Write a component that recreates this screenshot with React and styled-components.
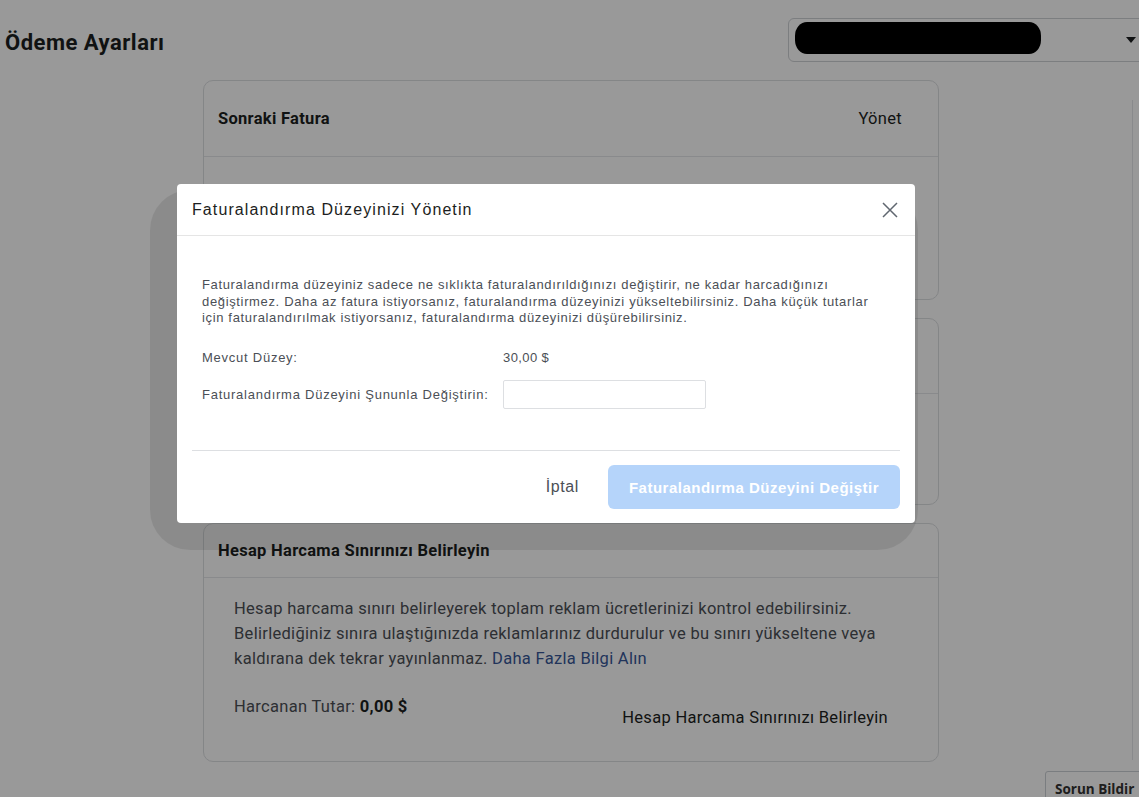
import React from "react";
import styled, { createGlobalStyle } from "styled-components";

const Global = createGlobalStyle`
  html, body {
    margin: 0;
    padding: 0;
    background: #ffffff;
    overflow: hidden;
  }
  body {
    font-family: Roboto, "Liberation Sans", Arial, sans-serif;
    color: #1c1e21;
  }
  * { box-sizing: border-box; }
`;

const Page = styled.div`
  width: 1139px;
  height: 797px;
  position: relative;
  overflow: hidden;
  background: #ffffff;
`;

const TopBar = styled.header`
  display: flex;
  align-items: center;
  justify-content: space-between;
  height: 80px;
  padding: 0 0 0 5px;
`;

const PageTitle = styled.h1`
  margin: 0;
  font-size: 22px;
  font-weight: 700;
  color: #1c1e21;
  letter-spacing: 0.5px;
  padding-top: 4px;
`;

const AccountSelect = styled.div`
  width: 364px;
  height: 44px;
  margin-right: -13px;
  border: 1px solid #cfd2d6;
  border-radius: 6px;
  display: flex;
  align-items: center;
  justify-content: space-between;
  padding: 0 15px 0 6px;
`;

const Caret = styled.span`
  width: 0;
  height: 0;
  border-left: 5px solid transparent;
  border-right: 5px solid transparent;
  border-top: 6px solid #1c1e21;
`;

const Columns = styled.div`
  display: grid;
  grid-template-columns: 203px 736px 1fr;
`;

const Stack = styled.main`
  grid-column: 2;
  display: flex;
  flex-direction: column;
  gap: 18px;
`;

const RightRail = styled.aside`
  grid-column: 3;
  justify-self: end;
  width: 7px;
  height: 660px;
  margin-top: 20px;
  border-left: 1px solid #e4e6e9;
`;

const Card = styled.section`
  border: 1px solid #dddfe2;
  border-radius: 10px;
  background: #ffffff;
  min-height: ${(p) => p.$min || 0}px;
  display: flex;
  flex-direction: column;
`;

const CardHead = styled.div`
  height: ${(p) => p.$h || 76}px;
  padding: 0 36px 0 14px;
  display: flex;
  align-items: center;
  justify-content: space-between;
  border-bottom: 1px solid #e4e6e9;
`;

const CardTitle = styled.h2`
  margin: 0;
  font-size: 16.5px;
  font-weight: 700;
  letter-spacing: 0.3px;
  color: #1c1e21;
`;

const HeadLink = styled.span`
  font-size: 16.5px;
  color: #1c1e21;
  letter-spacing: 0.3px;
`;

const CardDivider = styled.div`
  height: 75px;
  border-bottom: 1px solid #e4e6e9;
`;

const CardBody = styled.div`
  padding: 18px 50px 34px 30px;
`;

const BodyText = styled.p`
  margin: 0;
  font-size: 16.5px;
  line-height: 25px;
  color: #4b4f56;
  letter-spacing: 0.3px;
  white-space: nowrap;
`;

const Link = styled.a`
  color: #385898;
  text-decoration: none;
`;

const SpendRow = styled.div`
  display: flex;
  justify-content: space-between;
  align-items: flex-start;
  margin-top: 26px;
  font-size: 16.5px;
  letter-spacing: 0.3px;
  color: #4b4f56;
`;

const SpendRight = styled.span`
  margin-top: 11px;
  color: #1c1e21;
`;

const Strong = styled.b`
  color: #1c1e21;
`;

const ReportButton = styled.button`
  position: absolute;
  left: 1045px;
  top: 771px;
  height: 36px;
  width: 110px;
  padding: 0 0 0 9px;
  text-align: left;
  border: 1px solid #ccd0d5;
  border-radius: 3px;
  background: #ffffff;
  font-family: "Open Sans", "Liberation Sans", sans-serif;
  font-weight: 700;
  font-size: 13.5px;
  color: #333;
  line-height: 28px;
`;

/* dimming layer and dialog */
const Scrim = styled.div`
  position: absolute;
  inset: 0;
  background: rgba(0, 0, 0, 0.4);
  padding: 184px 0 0 177px;
`;

const Halo = styled.div`
  position: absolute;
  left: 150px;
  top: 190px;
  width: 768px;
  height: 360px;
  border-radius: 40px;
  background: rgba(0, 0, 0, 0.085);
`;

const Redaction = styled.div`
  position: absolute;
  left: 795px;
  top: 22px;
  width: 246px;
  height: 32px;
  border-radius: 12px / 14px;
  background: #000;
`;

const Dialog = styled.div`
  position: relative;
  width: 738px;
  height: 339px;
  background: #ffffff;
  border-radius: 4px;
  font-family: "Liberation Sans", Arial, sans-serif;
  display: flex;
  flex-direction: column;
  padding: 0 15px;
`;

const DialogHead = styled.div`
  height: 52px;
  display: flex;
  align-items: center;
  justify-content: space-between;
  border-bottom: 1px solid #e5e5e5;
  margin: 0 -15px;
  padding: 0 15px 0 15px;
`;

const DialogTitle = styled.h3`
  margin: 0;
  font-size: 16px;
  font-weight: 400;
  letter-spacing: 1.1px;
  color: #1c1e21;
`;

const CloseButton = styled.button`
  border: 0;
  background: none;
  padding: 0;
  width: 18px;
  height: 18px;
  display: flex;
  align-items: center;
  justify-content: center;
  margin-right: 1px;
`;

const DialogBody = styled.div`
  padding: 41px 10px 0 10px;
  height: 215px;
  border-bottom: 1px solid #dddfe2;
`;

const Intro = styled.p`
  margin: 0 0 22px;
  font-size: 13px;
  line-height: 16.5px;
  letter-spacing: 0.65px;
  color: #4b4f56;
  white-space: nowrap;
`;

const FieldRow = styled.div`
  display: grid;
  grid-template-columns: 301px 203px;
  align-items: center;
  min-height: ${(p) => p.$h || 26}px;
  font-size: 13px;
  letter-spacing: 0.75px;
  color: #4b4f56;
`;

const FieldValue = styled.span`
  color: #4b4f56;
  letter-spacing: 0.4px;
`;

const LevelInput = styled.input`
  height: 29px;
  border: 1px solid #dddfe2;
  border-radius: 2px;
  outline: none;
`;

const DialogFoot = styled.div`
  flex: 1;
  display: flex;
  align-items: center;
  justify-content: flex-end;
  gap: 29px;
`;

const CancelButton = styled.button`
  border: 0;
  background: none;
  padding: 0;
  font-family: "Liberation Sans", Arial, sans-serif;
  font-size: 16px;
  letter-spacing: 0.6px;
  color: #4b4f56;
`;

const PrimaryButton = styled.button`
  width: 292px;
  height: 44px;
  border: 0;
  border-radius: 6px;
  background: #b5d4fa;
  color: #ffffff;
  font-family: "Liberation Sans", Arial, sans-serif;
  font-weight: 700;
  font-size: 15px;
  letter-spacing: 0.5px;
`;

export default function App() {
  return (
    <>
      <Global />
      <Page>
        <TopBar>
          <PageTitle>Ödeme Ayarları</PageTitle>
          <AccountSelect>
            <span />
            <Caret />
          </AccountSelect>
        </TopBar>

        <Columns>
          <Stack>
            <Card $min={220}>
              <CardHead>
                <CardTitle>Sonraki Fatura</CardTitle>
                <HeadLink>Yönet</HeadLink>
              </CardHead>
            </Card>

            <Card $min={187}>
              <CardDivider />
            </Card>

            <Card>
              <CardHead $h={54}>
                <CardTitle>Hesap Harcama Sınırınızı Belirleyin</CardTitle>
              </CardHead>
              <CardBody>
                <BodyText>
                  Hesap harcama sınırı belirleyerek toplam reklam ücretlerinizi kontrol edebilirsiniz.
                  <br />
                  Belirlediğiniz sınıra ulaştığınızda reklamlarınız durdurulur ve bu sınırı yükseltene veya
                  <br />
                  kaldırana dek tekrar yayınlanmaz. <Link href="#">Daha Fazla Bilgi Alın</Link>
                </BodyText>
                <SpendRow>
                  <span>
                    Harcanan Tutar: <Strong>0,00 $</Strong>
                  </span>
                  <SpendRight>Hesap Harcama Sınırınızı Belirleyin</SpendRight>
                </SpendRow>
              </CardBody>
            </Card>
          </Stack>
          <RightRail />
        </Columns>

        <ReportButton>Sorun Bildir</ReportButton>

        <Scrim>
          <Halo />
          <Dialog>
            <DialogHead>
              <DialogTitle>Faturalandırma Düzeyinizi Yönetin</DialogTitle>
              <CloseButton aria-label="Kapat">
                <svg width="16" height="16" viewBox="0 0 16 16">
                  <path d="M1 1 L15 15 M15 1 L1 15" stroke="#606770" strokeWidth="1.5" fill="none" />
                </svg>
              </CloseButton>
            </DialogHead>
            <DialogBody>
              <Intro>
                Faturalandırma düzeyiniz sadece ne sıklıkta faturalandırıldığınızı değiştirir, ne kadar harcadığınızı
                <br />
                değiştirmez. Daha az fatura istiyorsanız, faturalandırma düzeyinizi yükseltebilirsiniz. Daha küçük tutarlar
                <br />
                için faturalandırılmak istiyorsanız, faturalandırma düzeyinizi düşürebilirsiniz.
              </Intro>
              <FieldRow $h={18}>
                <span>Mevcut Düzey:</span>
                <FieldValue>30,00 $</FieldValue>
              </FieldRow>
              <FieldRow $h={56}>
                <span>Faturalandırma Düzeyini Şununla Değiştirin:</span>
                <LevelInput />
              </FieldRow>
            </DialogBody>
            <DialogFoot>
              <CancelButton>İptal</CancelButton>
              <PrimaryButton>Faturalandırma Düzeyini Değiştir</PrimaryButton>
            </DialogFoot>
          </Dialog>
        </Scrim>
        <Redaction />
      </Page>
    </>
  );
}
